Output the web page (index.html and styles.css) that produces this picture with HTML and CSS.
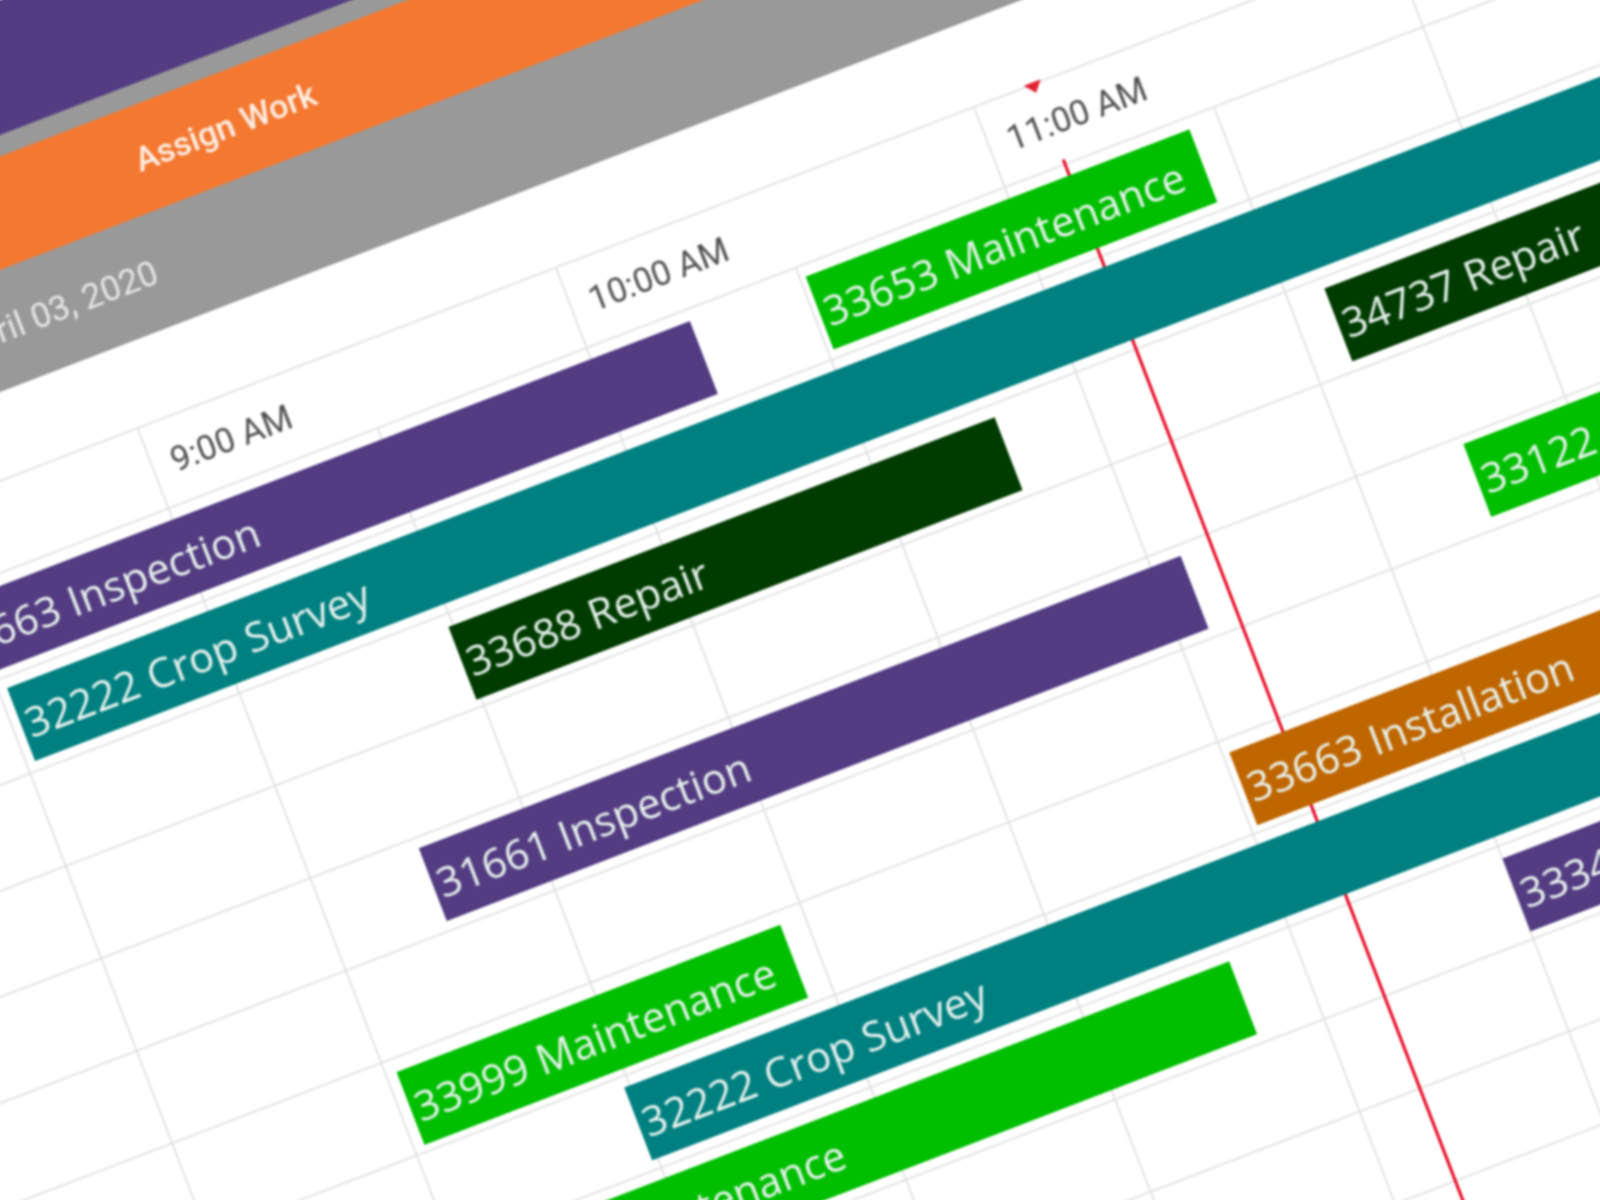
FILE: index.html
```html
<!DOCTYPE html>
<html lang="en">
<head>
<meta charset="utf-8">
<title>Schedule</title>
<link rel="stylesheet" href="styles.css">
</head>
<body>
<div class="stage">
  <div class="canvas">
    <div class="topbar"></div>
    <div class="toolbar">
      <div class="assign">Assign Work</div>
      <div class="date-row"><span class="date">April 03, 2020</span></div>
    </div>
    <div class="hours">
      <div class="hour"></div>
      <div class="hour">9:00 AM</div>
      <div class="hour">10:00 AM</div>
      <div class="hour">11:00 AM<span class="now-mark"></span></div>
      <div class="hour"></div>
    </div>
    <div class="rows">
      <div class="now-line"></div>
      <div class="row">
        <div class="bar purple low1" style="left:213px;width:816px">33663 Inspection</div>
        <div class="bar green low1" style="left:1153px;width:411px">33653 Maintenance</div>
      </div>
      <div class="row">
        <div class="bar teal" style="left:260px;width:1840px">32222 Crop Survey</div>
      </div>
      <div class="row">
        <div class="bar dark low2" style="left:694px;width:585px">33688 Repair</div>
        <div class="bar dark" style="left:1633px;width:467px">34737 Repair</div>
      </div>
      <div class="row"></div>
      <div class="row">
        <div class="bar purple" style="left:587px;width:816px">31661 Inspection</div>
        <div class="bar green high3" style="left:1707px;width:393px">33122</div>
      </div>
      <div class="row"></div>
      <div class="row">
        <div class="bar green low3" style="left:486px;width:411px">33999 Maintenance</div>
        <div class="bar orange low3" style="left:1378px;width:722px">33663 Installation</div>
      </div>
      <div class="row">
        <div class="bar teal" style="left:693px;width:1407px">32222 Crop Survey</div>
      </div>
      <div class="row">
        <div class="bar green" style="left:486px;width:817px">33653 Maintenance</div>
        <div class="bar purple low2" style="left:1595px;width:505px">33344</div>
      </div>
      <div class="row"></div>
      <div class="row"></div>
      <div class="row"></div>
    </div>
  </div>
</div>
</body>
</html>
```
FILE: styles.css
```css
* { box-sizing: border-box; }
html, body { margin: 0; padding: 0; background: #fff; }
.stage {
  position: relative;
  width: 1600px;
  height: 1200px;
  overflow: hidden;
  background: #fff;
}
.canvas {
  position: absolute;
  top: 0;
  left: -500px;
  width: 2100px;
  display: flex;
  flex-direction: column;
  transform-origin: 500px 0;
  transform: rotate(-21deg);
  filter: blur(0.8px);
  background: #fff;
  font-family: "Open Sans", sans-serif;
}
.topbar { height: 126px; background: #533c82; }
.toolbar {
  height: 240px;
  padding-top: 20px;
  background: #999;
  display: flex;
  flex-direction: column;
}
.assign {
  width: 1330px;
  height: 106px;
  display: flex;
  align-items: center;
  justify-content: center;
  background: #f47830;
  color: #fdeee4;
  font-family: Roboto, sans-serif;
  font-size: 34px;
  font-weight: 500;
}
.date-row {
  flex: 1;
  width: 549px;
  display: flex;
  align-items: center;
  justify-content: flex-end;
}
.date {
  color: #e6e6e6;
  font-family: Roboto, sans-serif;
  font-size: 35px;
  white-space: nowrap;
}
.hours {
  margin-top: 82px;
  height: 86px;
  padding-left: 26px;
  display: flex;
  border-top: 2px solid #e4e4e4;
}
.hour {
  position: relative;
  flex: 0 0 448px;
  padding-left: 19px;
  border-left: 2px solid #e4e4e4;
  display: flex;
  align-items: center;
  color: #505050;
  font-family: Roboto, sans-serif;
  font-size: 34.5px;
}
.now-mark {
  position: absolute;
  left: 53px;
  top: -3px;
  width: 0;
  height: 0;
  border-left: 9px solid transparent;
  border-right: 9px solid transparent;
  border-top: 11px solid #e3202f;
}
.rows {
  position: relative;
  border-top: 2px solid #e4e4e4;
  background-image: linear-gradient(to right, #e4e4e4 2px, transparent 2px);
  background-size: 224px 100%;
  background-position: 26px 0;
}
.row {
  position: relative;
  height: 99px;
  border-bottom: 2px solid #e4e4e4;
}
.now-line {
  position: absolute;
  top: -6px;
  bottom: 0;
  left: 1434px;
  width: 3px;
  background: #e8051f;
  z-index: 1;
}
.bar {
  position: absolute;
  top: 10px;
  height: 78px;
  padding-left: 5px;
  display: flex;
  align-items: center;
  color: #e8f2ee;
  font-size: 41.8px;
  white-space: nowrap;
  z-index: 2;
}
.low1 { top: 11px; }
.low2 { top: 12px; }
.low3 { top: 13px; }
.high3 { top: 7px; }
.purple { background: #533c82; }
.green { background: #00bf00; }
.teal { background: #008080; }
.dark { background: #003c00; }
.orange { background: #bf6600; }
```
